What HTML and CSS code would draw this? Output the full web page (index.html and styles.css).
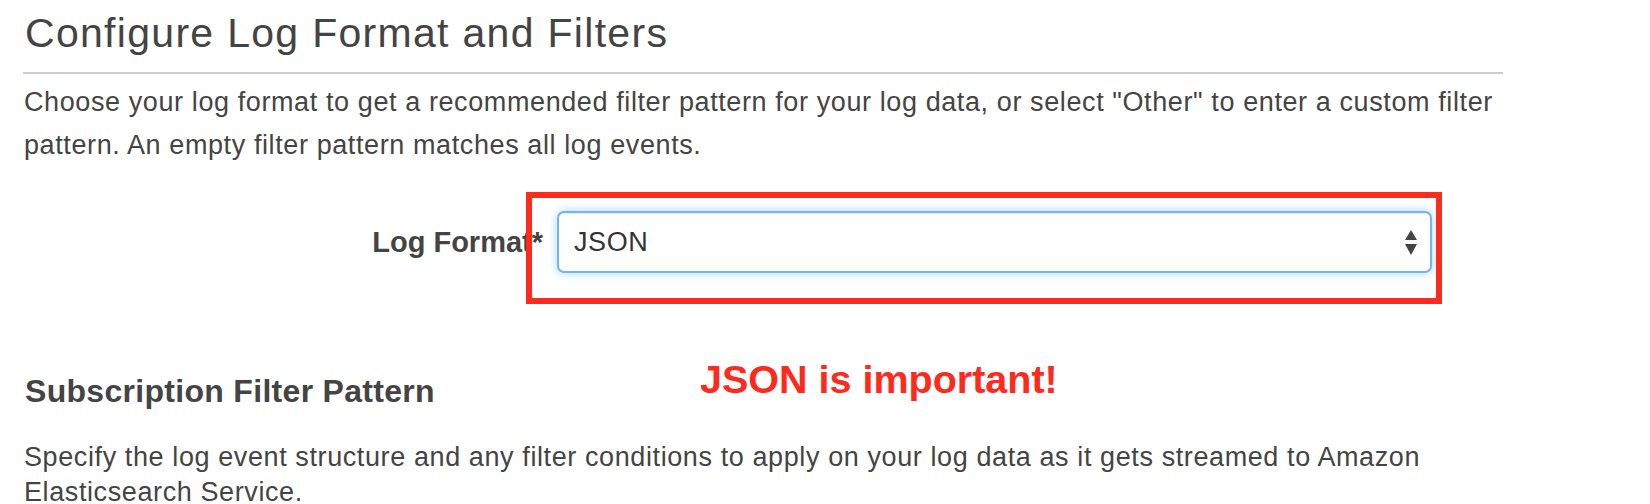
FILE: index.html
```html
<!DOCTYPE html>
<html lang="en">
<head>
<meta charset="utf-8">
<title>Configure Log Format and Filters</title>
<link rel="stylesheet" href="styles.css">
</head>
<body>
<div class="page">
  <h1 class="title">Configure Log Format and Filters</h1>
  <p class="text text-intro">Choose your log format to get a recommended filter pattern for your log data, or select "Other" to enter a custom filter pattern. An empty filter pattern matches all log events.</p>

  <div class="form-row">
    <label class="form-label">Log Format*</label>
    <div class="select">
      <span class="select-value">JSON</span>
      <svg class="select-arrows" width="12" height="25" viewBox="0 0 12 25" aria-hidden="true">
        <path d="M6 0 L12 10 L0 10 Z" fill="#444"/>
        <path d="M0 14 L12 14 L6 25 Z" fill="#444"/>
      </svg>
    </div>
    <div class="highlight-box"></div>
  </div>

  <div class="section-head">
    <h3 class="subtitle">Subscription Filter Pattern</h3>
    <div class="annotation">JSON is important!</div>
  </div>
  <p class="text text-section">Specify the log event structure and any filter conditions to apply on your log data as it gets streamed to Amazon Elasticsearch Service.</p>
</div>
</body>
</html>
```

FILE: styles.css
```css
html, body {
  margin: 0;
  padding: 0;
  background: #ffffff;
}

body {
  font-family: "Liberation Sans", Arial, Helvetica, sans-serif;
  color: #444444;
  overflow: hidden;
}

.page {
  width: 1480px;
  padding: 10px 0 0 23px;
}

.title {
  margin: 0;
  font-size: 41px;
  line-height: 46px;
  font-weight: normal;
  letter-spacing: 1.3px;
  color: #444444;
  padding: 0 0 16px 2px;
  border-bottom: 2px solid #cccccc;
}

.text {
  margin: 0;
  font-size: 27px;
  line-height: 35px;
  letter-spacing: 0.6px;
  padding-left: 1px;
}

.text-intro {
  margin-top: 7px;
  line-height: 43px;
}

.text-section {
  margin-top: 30px;
}

.form-row {
  position: relative;
  display: flex;
  align-items: center;
  margin-top: 44px;
  height: 62px;
}

.form-label {
  width: 520px;
  flex: none;
  text-align: right;
  font-weight: bold;
  font-size: 29px;
  color: #444444;
}

.select {
  margin-left: 14px;
  width: 875px;
  height: 62px;
  box-sizing: border-box;
  border: 2px solid #72b6ee;
  border-radius: 7px;
  box-shadow: inset 0 1px 1px rgba(0,0,0,0.075), 0 0 10px rgba(102,175,233,0.55);
  display: flex;
  align-items: center;
  justify-content: space-between;
  padding: 0 13px 0 15px;
  background: #ffffff;
}

.select-value {
  font-size: 27px;
  letter-spacing: 0.6px;
  color: #333333;
}

.select-arrows {
  display: block;
}

.highlight-box {
  position: absolute;
  left: 503px;
  top: -19px;
  width: 916px;
  height: 112px;
  box-sizing: border-box;
  border: 6px solid #fd2a1e;
  pointer-events: none;
}

.section-head {
  position: relative;
  margin-top: 99px;
}

.subtitle {
  margin: 0;
  font-size: 32px;
  line-height: 38px;
  font-weight: bold;
  letter-spacing: 0.3px;
  color: #444444;
  padding-left: 2px;
}

.annotation {
  position: absolute;
  left: 677px;
  top: -16px;
  font-size: 39.5px;
  line-height: 46px;
  font-weight: bold;
  color: #fd2a1e;
  white-space: nowrap;
}
```
